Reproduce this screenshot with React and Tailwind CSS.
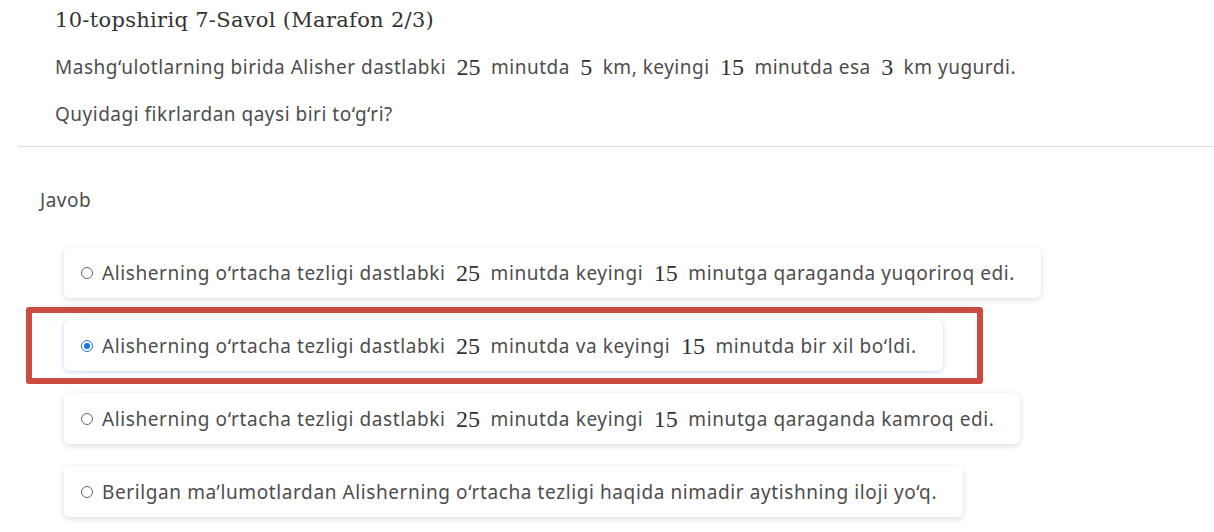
const sans = { fontFamily: '"Noto Sans", "Open Sans", sans-serif' };

function M({ children }) {
    return (
        <span className="inline-block px-[5px] text-[24px] leading-none text-[#333] tracking-normal align-[-1px]" style={{ fontFamily: '"Liberation Serif", serif' }}>
            {children}
        </span>
    );
}

function Radio({ checked }) {
    return checked ? (
        <span className="inline-flex items-center justify-center w-[12px] h-[12px] rounded-full border border-[#1a73e8] bg-white mr-[9px] shrink-0">
            <span className="w-[6px] h-[6px] rounded-full bg-[#1a73e8]"></span>
        </span>
    ) : (
        <span className="inline-block w-[12px] h-[12px] rounded-full border border-[#666] bg-white mr-[9px] shrink-0"></span>
    );
}

function Option({ checked, children }) {
    return (
        <div className={`inline-flex items-center h-[51px] pl-[17px] pr-[26px] bg-white rounded-md
            ${checked ? 'shadow-[0_1px_4px_rgba(66,133,244,0.35)]' : 'shadow-[0_2px_6px_rgba(0,0,0,0.14)]'}`}>
            <Radio checked={checked} />
            <span className="text-[19px] tracking-[0.6px] text-[#4d4d4d] whitespace-nowrap leading-[26px]">{children}</span>
        </div>
    );
}

export default function App() {
    return (
        <div className="w-[1214px] h-[532px] bg-white overflow-hidden" style={sans}>
            <div className="pl-[55px] pt-[5px]">
                <h1 className="text-[21px] tracking-[0.3px] text-[#333] leading-[30px]" style={{ fontFamily: '"DejaVu Serif", serif' }}>
                    10-topshiriq 7-Savol (Marafon 2/3)
                </h1>
                <p className="mt-[17px] text-[19px] tracking-[0.5px] text-[#4d4d4d] leading-[30px] whitespace-nowrap">
                    Mashg‘ulotlarning birida Alisher dastlabki <M>25</M> minutda <M>5</M> km, keyingi <M>15</M> minutda esa <M>3</M> km yugurdi.
                </p>
                <p className="mt-[17px] text-[19px] tracking-[0.5px] text-[#4d4d4d] leading-[30px]">
                    Quyidagi fikrlardan qaysi biri to‘g‘ri?
                </p>
            </div>
            <div className="ml-[18px] mt-[17px] h-px bg-[#dedede]"></div>

            <div className="pl-[40px] mt-[40px] text-[19px] tracking-[0.5px] text-[#4d4d4d] leading-[26px]">Javob</div>

            <div className="mt-[34px] pl-[64px] flex flex-col items-start gap-[22px]">
                <Option>
                    Alisherning o‘rtacha tezligi dastlabki <M>25</M> minutda keyingi <M>15</M> minutga qaraganda yuqoriroq edi.
                </Option>
                <div className="relative">
                    <Option checked>
                        Alisherning o‘rtacha tezligi dastlabki <M>25</M> minutda va keyingi <M>15</M> minutda bir xil bo‘ldi.
                    </Option>
                    <div className="absolute left-[-38px] top-[-13px] w-[957px] h-[77px] border-[6px] border-[#cc4b41] rounded-[3px] pointer-events-none"></div>
                </div>
                <Option>
                    Alisherning o‘rtacha tezligi dastlabki <M>25</M> minutda keyingi <M>15</M> minutga qaraganda kamroq edi.
                </Option>
                <Option>
                    Berilgan ma’lumotlardan Alisherning o‘rtacha tezligi haqida nimadir aytishning iloji yo‘q.
                </Option>
            </div>
        </div>
    );
}
